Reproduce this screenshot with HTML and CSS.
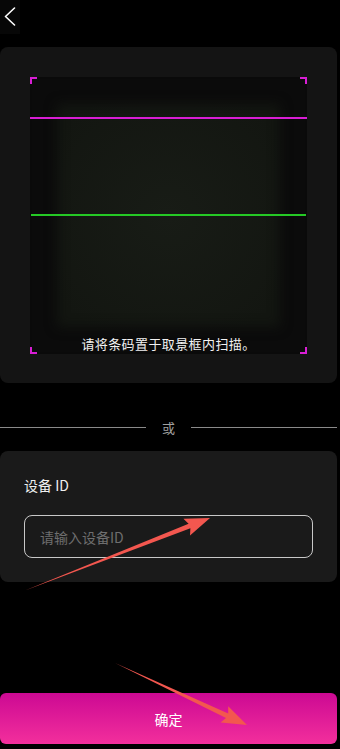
FILE: index.html
```html
<!DOCTYPE html>
<html lang="zh-CN">
<head>
    <meta charset="UTF-8">
    <meta name="viewport" content="width=device-width, initial-scale=1.0">
    <title>扫描设备</title>
    <link rel="stylesheet" href="styles.css">
</head>
<body>
    <div class="page">
        <div class="topbar">
            <button class="back" aria-label="返回">
                <svg width="12" height="20" viewBox="0 0 12 20">
                    <polyline points="10.5,1 1.5,9.5 10.5,18" fill="none" stroke="#fff" stroke-width="1.6" stroke-linecap="round" stroke-linejoin="round"/>
                </svg>
            </button>
        </div>

        <div class="scan-card">
            <div class="scan-frame">
                <span class="corner tl"></span>
                <span class="corner tr"></span>
                <span class="corner bl"></span>
                <span class="corner br"></span>
                <span class="scan-line pink"></span>
                <span class="scan-line green"></span>
                <p class="scan-tip">请将条码置于取景框内扫描。</p>
            </div>
        </div>

        <div class="divider">
            <span class="rule"></span>
            <span class="or">或</span>
            <span class="rule"></span>
        </div>

        <div class="id-card">
            <label class="id-label" for="device-id">设备 ID</label>
            <input id="device-id" class="id-input" type="text" placeholder="请输入设备ID">
        </div>

        <button class="confirm">确定</button>

        <!-- 标注箭头 -->
        <svg class="marks" width="340" height="749" viewBox="0 0 340 749">
            <polygon points="25,590.5 190.4,528.3 190,535.5 210,518 183.4,518.7 188.6,523.7" fill="#f3574f"/>
            <polygon points="115,663 228.2,713.4 228.2,706.3 247,725 220.6,722.5 226,717.9" fill="#f3574f"/>
        </svg>
    </div>
</body>
</html>
```

FILE: styles.css
```css
* {
    box-sizing: border-box;
}
body {
    margin: 0;
    background: #000;
    font-family: "Noto Sans CJK SC", "Noto Sans", sans-serif;
    color: #fff;
}
.page {
    position: relative;
    width: 340px;
    min-height: 749px;
    overflow: hidden;
}
.topbar {
    height: 47px;
}
.back {
    display: flex;
    align-items: center;
    justify-content: center;
    width: 20px;
    height: 34px;
    padding: 0;
    border: none;
    background: #070707;
    cursor: pointer;
}
.scan-card {
    width: 337px;
    height: 336px;
    padding: 30px;
    background: #141414;
    border-radius: 8px;
}
.scan-frame {
    position: relative;
    width: 277px;
    height: 277px;
    display: flex;
    flex-direction: column;
    justify-content: flex-end;
    align-items: center;
    background: radial-gradient(circle at 50% 50%, #181c16 0%, #131611 70%);
    box-shadow: inset 0 0 12px 27px #0b0b0b;
}
.corner {
    position: absolute;
    width: 7px;
    height: 7px;
    border-color: #d81ed4;
    border-style: solid;
    border-width: 0;
}
.tl { top: 0; left: 0; border-top-width: 2px; border-left-width: 2px; }
.tr { top: 0; right: 0; border-top-width: 2px; border-right-width: 2px; }
.bl { bottom: 0; left: 0; border-bottom-width: 2px; border-left-width: 2px; }
.br { bottom: 0; right: 0; border-bottom-width: 2px; border-right-width: 2px; }
.scan-line {
    position: absolute;
    left: 0;
    right: 0;
    height: 2px;
}
.pink {
    top: 40px;
    background: #d81ed4;
}
.green {
    top: 137px;
    left: 1px;
    right: 1px;
    background: #25c925;
}
.scan-tip {
    margin: 0 0 1px;
    font-size: 13px;
    line-height: 18px;
    letter-spacing: 0.4px;
    color: #f2f2f2;
}
.divider {
    display: flex;
    align-items: center;
    width: 337px;
    height: 20px;
    margin: 34px 0 14px;
}
.rule {
    flex: 1;
    height: 1px;
    background: #8a8a8a;
}
.or {
    padding: 0 16px;
    font-size: 13px;
    color: #a0a0a0;
}
.id-card {
    display: flex;
    flex-direction: column;
    width: 337px;
    height: 131px;
    padding: 24px 24px 24px;
    background: #1a1a1a;
    border-radius: 8px;
}
.id-label {
    font-size: 14px;
    line-height: 20px;
    color: #f0f0f0;
}
.id-input {
    width: 289px;
    height: 43px;
    margin-top: 20px;
    padding: 0 15px;
    background: transparent;
    border: 1px solid #c8c8c8;
    border-radius: 8px;
    font-family: inherit;
    font-size: 14px;
    color: #fff;
    outline: none;
}
.id-input::placeholder {
    color: #6e6e6e;
}
.confirm {
    display: block;
    width: 337px;
    height: 51px;
    margin-top: 111px;
    border: none;
    border-radius: 6px;
    background: linear-gradient(180deg, #cc0993, #f32f9c);
    font-family: inherit;
    font-size: 14px;
    color: #fff;
    cursor: pointer;
}
.marks {
    position: absolute;
    top: 0;
    left: 0;
    pointer-events: none;
}
```
